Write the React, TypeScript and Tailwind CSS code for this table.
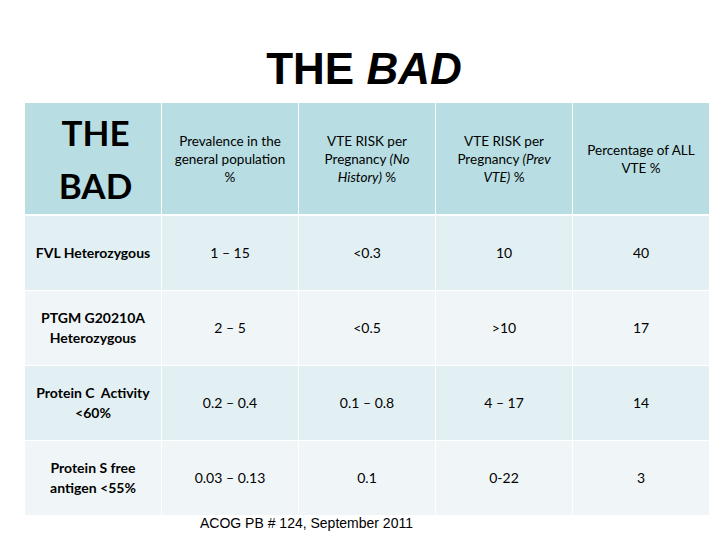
import React from 'react'

const rows = [
  { label: ['FVL Heterozygous'], values: ['1 – 15', '<0.3', '10', '40'] },
  { label: ['PTGM G20210A', 'Heterozygous'], values: ['2 – 5', '<0.5', '>10', '17'] },
  { label: ['Protein C\u00a0 Activity', '<60%'], values: ['0.2 – 0.4', '0.1 – 0.8', '4 – 17', '14'] },
  { label: ['Protein S free', 'antigen <55%'], values: ['0.03 – 0.13', '0.1', '0-22', '3'] },
]

export default function App() {
  return (
    <div className="w-[728px] h-[546px] bg-white overflow-hidden text-black">
      {/* Title */}
      <h1
        className="pt-[47px] text-center text-[44px] leading-[44px] font-bold"
        style={{ fontFamily: '"Liberation Sans", Arial, sans-serif' }}
      >
        THE <i>BAD</i>
      </h1>

      {/* Table */}
      <div
        className="ml-[25px] mt-[12px] w-[684px] flex flex-col bg-white"
        style={{ fontFamily: 'Lato, "Open Sans", sans-serif' }}
      >
        <div className="grid grid-cols-[136px_136px_136px_136px_136px] gap-x-px h-[111px]">
          <div className="bg-[#b8dee3] flex flex-col items-center justify-center pl-[5px] font-bold text-[35px] leading-[53px]">
            <span>THE</span>
            <span>BAD</span>
          </div>
          <div className="bg-[#b8dee3] flex items-center justify-center text-center text-[13.5px] leading-[18px]">
            <p>Prevalence in the<br />general population<br />%</p>
          </div>
          <div className="bg-[#b8dee3] flex items-center justify-center text-center text-[13.5px] leading-[18px]">
            <p>VTE RISK per<br />Pregnancy <i>(No</i><br /><i>History)</i> %</p>
          </div>
          <div className="bg-[#b8dee3] flex items-center justify-center text-center text-[13.5px] leading-[18px]">
            <p>VTE RISK per<br />Pregnancy <i>(Prev</i><br /><i>VTE)</i> %</p>
          </div>
          <div className="bg-[#b8dee3] flex items-center justify-center text-center text-[13.5px] leading-[18px]">
            <p>Percentage of ALL<br />VTE %</p>
          </div>
        </div>

        <div className="mt-[2px] flex flex-col gap-y-px">
          {rows.map((row, i) => {
            const bg = i % 2 === 0 ? 'bg-[#e3f0f3]' : 'bg-[#f0f6f8]'
            return (
              <div key={i} className="grid grid-cols-[136px_136px_136px_136px_136px] gap-x-px h-[74px]">
                <div className={`${bg} flex flex-col items-center justify-center text-center font-bold text-[14px] leading-[20px]`}>
                  {row.label.map((l, j) => (
                    <span key={j} className="whitespace-pre">{l}</span>
                  ))}
                </div>
                {row.values.map((v, j) => (
                  <div key={j} className={`${bg} flex items-center justify-center text-[14px] leading-[20px]`}>
                    {v}
                  </div>
                ))}
              </div>
            )
          })}
        </div>
      </div>

      {/* Source */}
      <p
        className="pl-[200px] text-[14px] leading-[16px]"
        style={{ fontFamily: '"Liberation Sans", Arial, sans-serif' }}
      >
        ACOG PB # 124, September 2011
      </p>
    </div>
  )
}
